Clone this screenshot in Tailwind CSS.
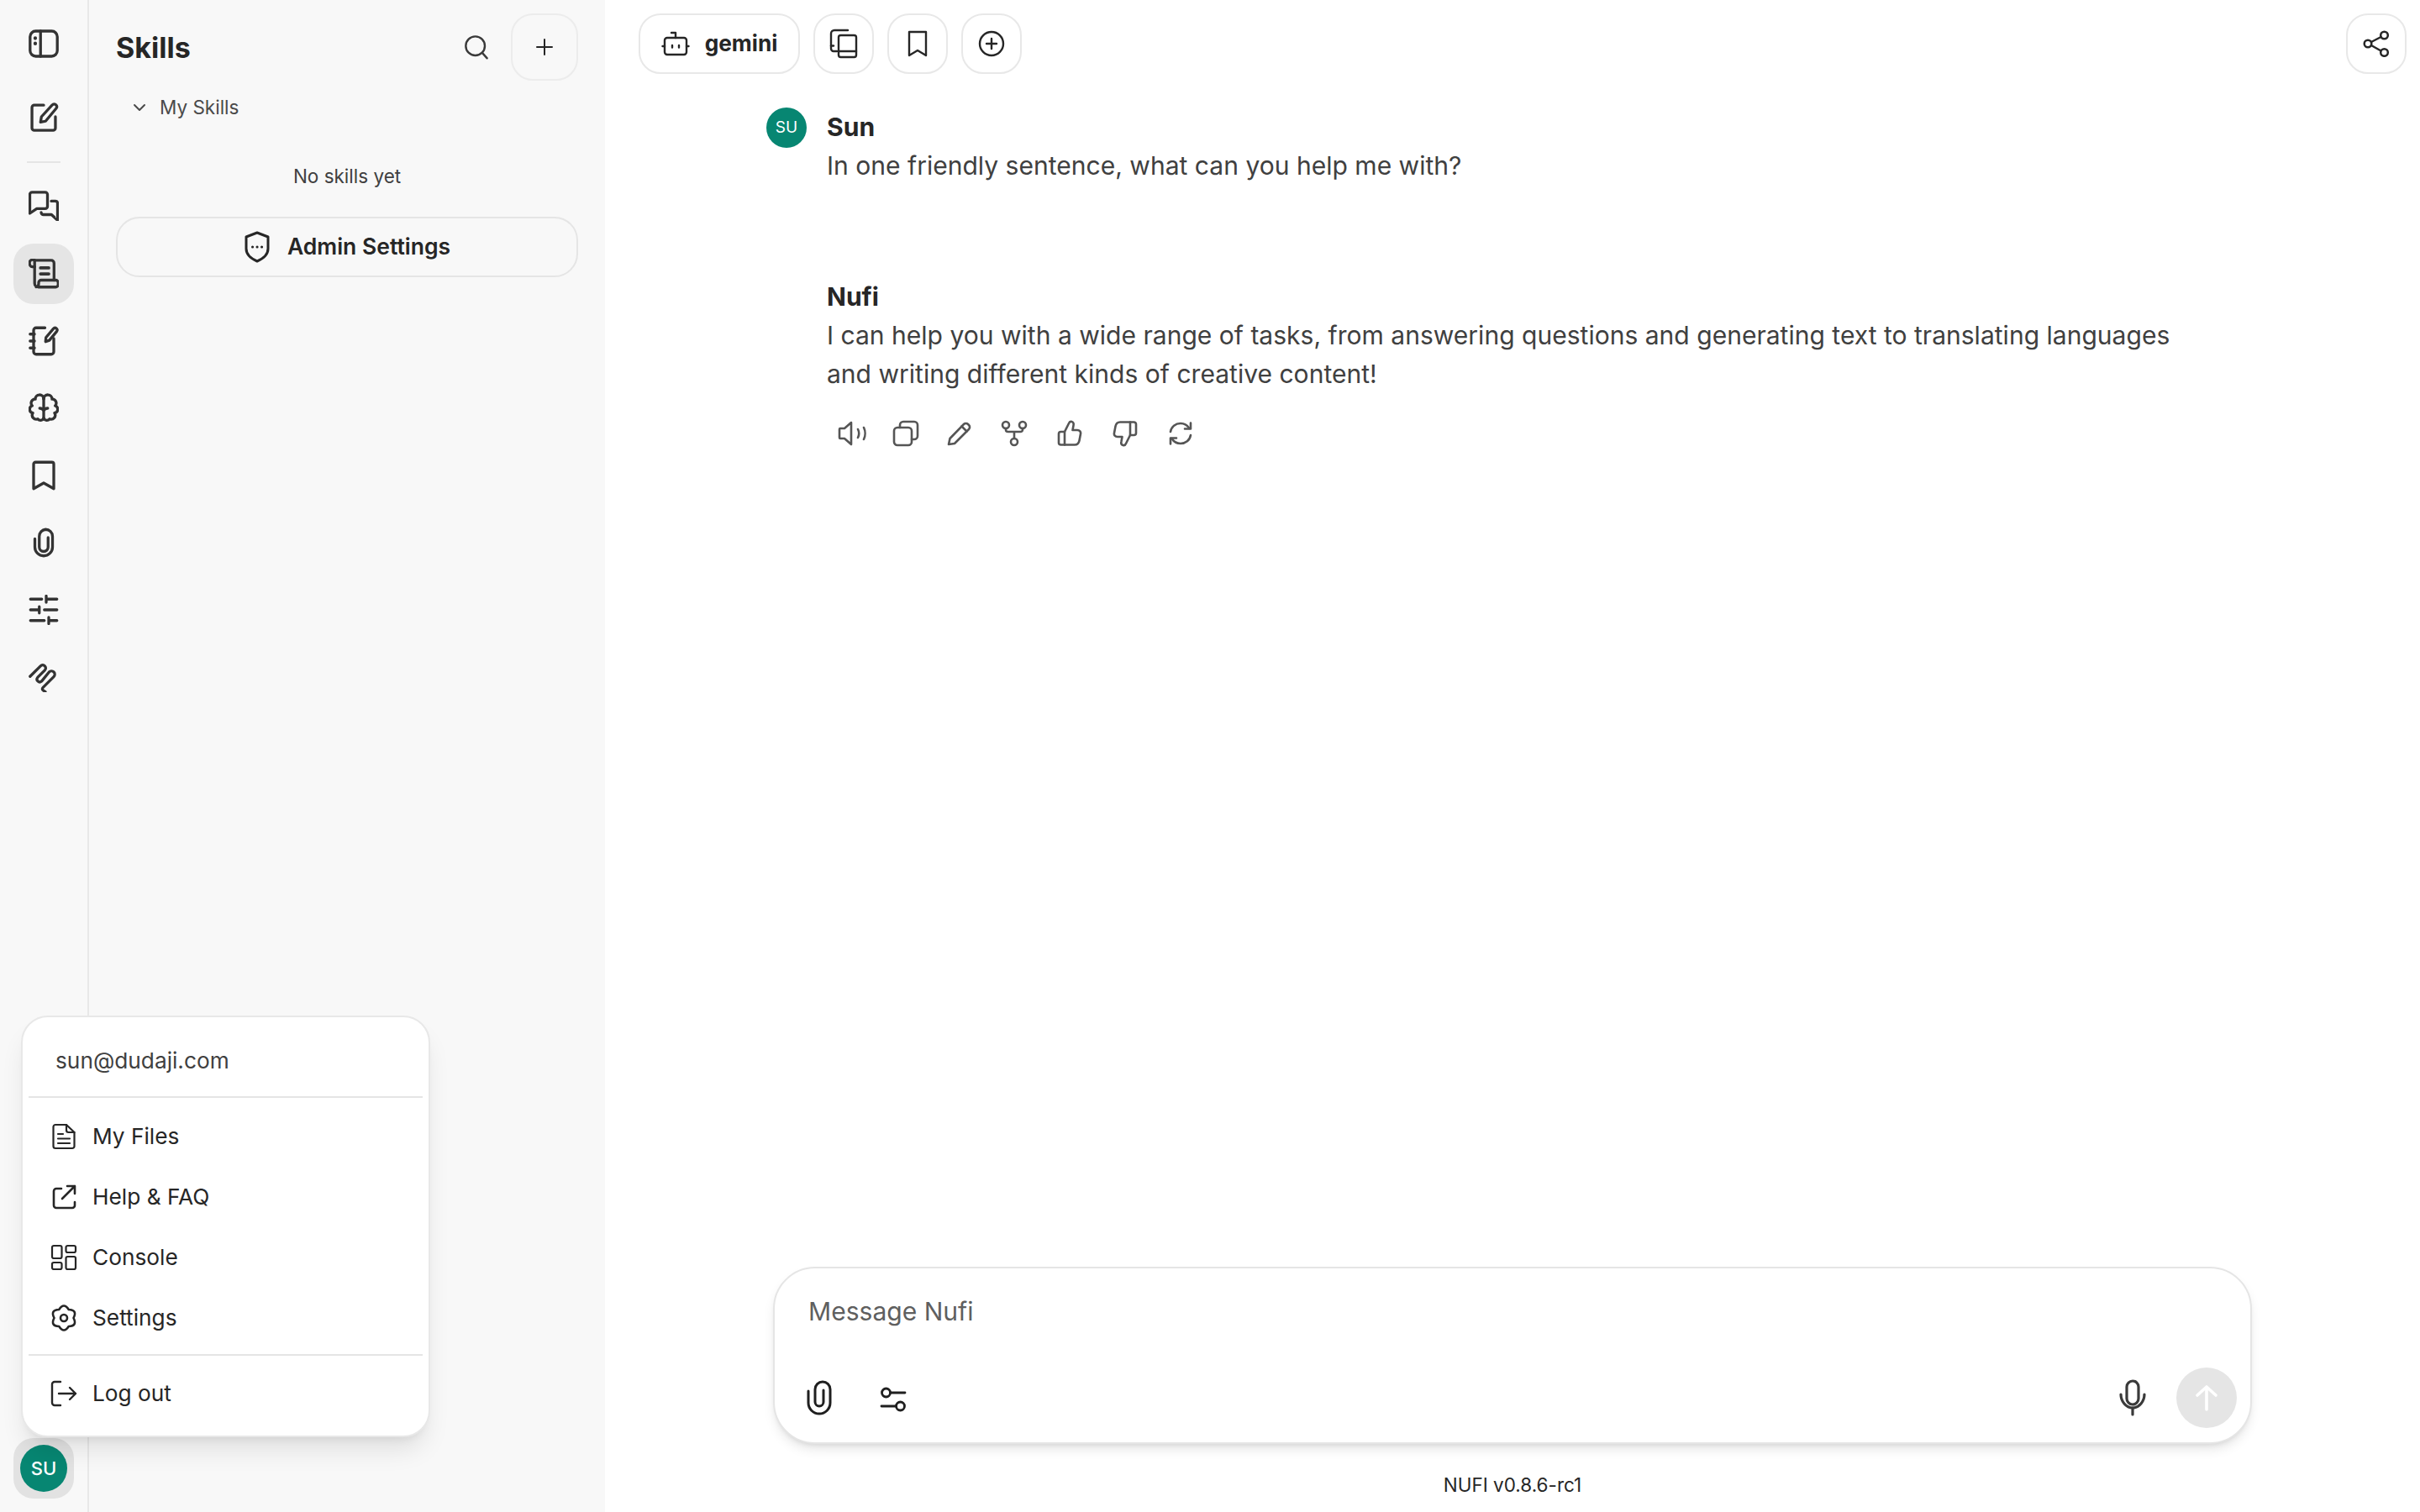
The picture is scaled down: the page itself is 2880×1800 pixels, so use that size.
<!DOCTYPE html>
<html lang="en">
<head>
  <meta charset="UTF-8" />
  <title>Nufi</title>
  <script src="https://cdn.jsdelivr.net/npm/@tailwindcss/browser@4"></script>
</head>
<body class="font-['Inter',sans-serif] bg-white">
  <div class="relative flex h-screen w-screen overflow-hidden">

    <!-- icon rail -->
    <aside class="flex w-[106px] shrink-0 flex-col items-center border-r-2 border-[#e8e8e8] bg-[#f8f8f8] text-[#333333]">
      <button class="mt-[16px] flex h-[72px] w-[72px] items-center justify-center">
        <svg class="h-[36px] w-[36px]" viewBox="0 0 24 24" fill="none" stroke="currentColor" stroke-width="2.200" stroke-linecap="round" stroke-linejoin="round"><rect x="1.200" y="2" width="21.600" height="20" rx="4.500"/><path d="M9.500 2v20"/><path d="M5.300 7.500v.2M5.300 11.800v.2" stroke-width="2.800"/></svg>
      </button>
      <button class="mt-[15px] flex h-[72px] w-[72px] items-center justify-center">
        <svg class="h-[36px] w-[36px]" viewBox="0 0 24 24" fill="none" stroke="currentColor" stroke-width="2.200" stroke-linecap="round" stroke-linejoin="round"><path d="M12 2.800H4.500a1.800 1.800 0 0 0-1.800 1.800V21a1.800 1.800 0 0 0 1.800 1.800h15a1.800 1.800 0 0 0 1.800-1.800v-9"/><path d="M9.500 16.300l.7-4.300L18.800 2.600a1.900 1.900 0 0 1 3 0c.8.900.8 2 0 2.900L13.500 15.500z"/></svg>
      </button>
      <div class="mt-[17px] h-[2px] w-[40px] bg-[#e5e5e5]"></div>
      <button class="mt-[15px] flex h-[72px] w-[72px] items-center justify-center">
        <svg class="h-[36px] w-[36px]" viewBox="0 0 24 24" fill="none" stroke="currentColor" stroke-width="2.200" stroke-linecap="round" stroke-linejoin="round"><path d="M2.800 1.200h10.400a1.800 1.800 0 0 1 1.800 1.800v9.500a1.800 1.800 0 0 1-1.800 1.800H6.500L1 18V3a1.800 1.800 0 0 1 1.800-1.800z"/><path d="M18 8.300h3.200A1.800 1.800 0 0 1 23 10v13.500l-4.800-4.500h-6.400A1.800 1.800 0 0 1 10 17.200"/></svg>
      </button>
      <button class="mt-[9px] flex h-[72px] w-[72px] items-center justify-center rounded-[24px] bg-[#e5e5e5]">
        <svg class="h-[36px] w-[36px]" viewBox="0 0 24 24" fill="none" stroke="currentColor" stroke-width="2.200" stroke-linecap="round" stroke-linejoin="round"><path d="M4.800 1.300H18a2.200 2.200 0 0 1 2.200 2.200V17"/><path d="M4.800 1.300A2.500 2.500 0 0 0 .8 3.600 2.600 2.600 0 0 0 3 6.400h1.800"/><path d="M4.800 1.300V19.500a3 3 0 0 0 3 3H21.500a2 2 0 0 0 2-2V19a2 2 0 0 0-2-2H10a2 2 0 0 0-2 2v1a2.500 2.500 0 0 1-2 2.400"/><path d="M9.500 7.300h6.500M9.500 12h6.500" stroke-width="2.500"/></svg>
      </button>
      <button class="mt-[8px] flex h-[72px] w-[72px] items-center justify-center">
        <svg class="h-[36px] w-[36px]" viewBox="0 0 24 24" fill="none" stroke="currentColor" stroke-width="2.200" stroke-linecap="round" stroke-linejoin="round"><path d="M13 1.500H6a2 2 0 0 0-2 2v17a2 2 0 0 0 2 2h12a2 2 0 0 0 2-2V10"/><path d="M1.200 6.500h3.500M1.200 12h3.500M1.200 17.500h3.500"/><path d="M13.500 12.500l.3-3.300 6-7.100a1.500 1.500 0 0 1 2.400 0c.7.700.7 1.500.1 2.300l-5.800 7z"/></svg>
      </button>
      <button class="mt-[8px] flex h-[72px] w-[72px] items-center justify-center">
        <svg class="h-[36px] w-[36px]" viewBox="0 0 24 24" fill="none" stroke="currentColor" stroke-width="2.200" stroke-linecap="round" stroke-linejoin="round"><path d="M12 4.500v15.500"/><path d="M8.800 12c1.300 0 2.400.6 3.200 1.800.8-1.200 1.900-1.800 3.200-1.800"/><path d="M12 4.500A3.300 3.300 0 0 0 5.400 4.800 3.100 3.100 0 0 0 2.900 10 3 3 0 0 0 3.400 15.800 3.200 3.200 0 0 0 7.300 20.500 2.800 2.800 0 0 0 12 20"/><path d="M12 4.500A3.300 3.300 0 0 1 18.600 4.800 3.100 3.100 0 0 1 21.100 10 3 3 0 0 1 20.600 15.800 3.200 3.200 0 0 1 16.700 20.500 2.800 2.800 0 0 1 12 20"/></svg>
      </button>
      <button class="mt-[8px] flex h-[72px] w-[72px] items-center justify-center">
        <svg class="h-[36px] w-[36px]" viewBox="0 0 24 24" fill="none" stroke="currentColor" stroke-width="2.200" stroke-linecap="round" stroke-linejoin="round"><path d="M5.500 1.500h13A1.500 1.500 0 0 1 20 3v19.500l-8-4.500-8 4.500V3a1.500 1.500 0 0 1 1.500-1.500z"/></svg>
      </button>
      <button class="mt-[8px] flex h-[72px] w-[72px] items-center justify-center">
        <svg class="h-[36px] w-[36px]" viewBox="0 0 24 24" fill="none" stroke="currentColor" stroke-width="2.200" stroke-linecap="round" stroke-linejoin="round"><path d="M5 9v6.500a7 7 0 0 0 14 0V7a5.500 5.500 0 0 0-5.500-5.500A5.500 5.500 0 0 0 8.500 7v8.500a3.500 3.500 0 0 0 7 0V8"/></svg>
      </button>
      <button class="mt-[8px] flex h-[72px] w-[72px] items-center justify-center">
        <svg class="h-[36px] w-[36px]" viewBox="0 0 24 24" fill="none" stroke="currentColor" stroke-width="2.200" stroke-linecap="round" stroke-linejoin="round"><path d="M1.500 3.500h9M14 3.500h8.500M14 1v5"/><path d="M1.500 12h7M8.500 9.500v5M12.500 12h10"/><path d="M1.500 20.500h11M16 20.500h6.500M16 18v5"/></svg>
      </button>
      <button class="mt-[8px] flex h-[72px] w-[72px] items-center justify-center">
        <svg class="h-[36px] w-[36px]" viewBox="0 0 24 24" fill="none" stroke="currentColor" stroke-width="2.200" stroke-linecap="round" stroke-linejoin="round"><path d="M1.200 11.500L9.500 3.200a2.400 2.400 0 0 1 3.400 3.400L7.200 12.300a2.200 2.200 0 0 0 3.100 3.100L16.300 8a2.600 2.600 0 0 1 3.700 3.700L11.500 20.300c-.8.800-.8 1.600 0 2.200l1.800 1.300"/></svg>
      </button>
      <button class="mt-auto mb-[16px] flex h-[72px] w-[72px] items-center justify-center rounded-[24px] bg-[#e2e2e2]">
        <span class="flex h-[56px] w-[56px] items-center justify-center rounded-full bg-[#078672] text-[22px] font-medium text-white">SU</span>
      </button>
    </aside>

    <!-- skills panel -->
    <section class="flex w-[614px] shrink-0 flex-col bg-[#f8f8f8] pl-[32px] pr-[32px] text-[#262626]">
      <div class="mt-[16px] flex h-[80px] items-center">
        <h1 class="text-[34px] font-bold">Skills</h1>
        <svg class="ml-auto mr-[25px] h-[32px] w-[32px] text-[#3a3a3a]" viewBox="0 0 24 24" fill="none" stroke="currentColor" stroke-width="1.800" stroke-linecap="round"><circle cx="11" cy="11" r="8.500"/><path d="M17.500 17.500L21.500 22"/></svg>
        <button class="flex h-[80px] w-[80px] items-center justify-center rounded-[26px] border-2 border-[#ececec]">
          <svg class="h-[20px] w-[20px]" viewBox="0 0 20 20" fill="none" stroke="currentColor" stroke-width="2" stroke-linecap="round"><path d="M10 1v18M1 10h18"/></svg>
        </button>
      </div>
      <div class="mt-[16px] flex h-[32px] items-center pl-[20px] text-[22.5px] text-[#4a4a4a]">
        <svg class="h-[16px] w-[16px]" viewBox="0 0 16 16" fill="none" stroke="currentColor" stroke-width="2" stroke-linecap="round" stroke-linejoin="round"><path d="M2 5l6 6 6-6"/></svg>
        <span class="ml-[16px]">My Skills</span>
      </div>
      <p class="mt-[50px] h-[32px] text-center text-[22.5px] leading-[32px] text-[#404040]">No skills yet</p>
      <button class="mt-[32px] flex h-[72px] items-center justify-center gap-[20px] rounded-[28px] border-2 border-[#e5e5e5] text-[26.5px] font-semibold">
        <svg class="h-[38px] w-[32px]" viewBox="0 0 32 38" fill="none" stroke="currentColor" stroke-width="3" stroke-linecap="round" stroke-linejoin="round"><path d="M16 2l13 5v14c0 8-6 12-13 15C9 33 3 29 3 21V7z"/><path d="M10.500 19h.1M16 19h.1M21.500 19h.1"/></svg>
        Admin Settings
      </button>
    </section>

    <!-- main -->
    <main class="flex min-w-0 flex-1 flex-col bg-white text-[#262626]">
      <header class="flex h-[88px] items-end pl-[40px] pr-[16px]">
        <button class="flex h-[72px] w-[192px] items-center justify-center gap-[18px] rounded-[26px] border-2 border-[#e8e8e8] text-[26.25px] font-bold">
          <svg class="h-[34px] w-[34px]" viewBox="0 0 34 34" fill="none" stroke="currentColor" stroke-width="2.400" stroke-linecap="round" stroke-linejoin="round"><rect x="4" y="10" width="26" height="20" rx="3"/><path d="M17 10V4h-5"/><path d="M1.500 20H4M30 20h2.500"/><path d="M13 19v2.500M21 19v2.500"/></svg>
          gemini
        </button>
        <button class="ml-[16px] flex h-[72px] w-[72px] items-center justify-center rounded-[26px] border-2 border-[#e8e8e8]">
          <svg class="h-[36px] w-[36px]" viewBox="0 0 36 36" fill="none" stroke="currentColor" stroke-width="2.400" stroke-linecap="round" stroke-linejoin="round"><path d="M23 2H7a4 4 0 0 0-4 4v18a3 3 0 0 0 3 3h4"/><path d="M3 20.500h3"/><rect x="12" y="8" width="21" height="26" rx="2.500"/><path d="M12 27h21"/></svg>
        </button>
        <button class="ml-[16px] flex h-[72px] w-[72px] items-center justify-center rounded-[26px] border-2 border-[#e8e8e8]">
          <svg class="h-[32px] w-[24px]" viewBox="0 0 24 32" fill="none" stroke="currentColor" stroke-width="2.400" stroke-linecap="round" stroke-linejoin="round"><path d="M2 2h20v28l-10-6-10 6z"/></svg>
        </button>
        <button class="ml-[16px] flex h-[72px] w-[72px] items-center justify-center rounded-[26px] border-2 border-[#e8e8e8]">
          <svg class="h-[32px] w-[32px]" viewBox="0 0 32 32" fill="none" stroke="currentColor" stroke-width="2.400" stroke-linecap="round"><circle cx="16" cy="16" r="14"/><path d="M16 10v12M10 16h12"/></svg>
        </button>
        <button class="ml-auto flex h-[72px] w-[72px] items-center justify-center rounded-[26px] border-2 border-[#e8e8e8]">
          <svg class="h-[32px] w-[32px]" viewBox="0 0 32 32" fill="none" stroke="currentColor" stroke-width="2.500" stroke-linecap="round"><circle cx="6" cy="16" r="4.300"/><circle cx="25.500" cy="6" r="4.300"/><circle cx="25.500" cy="26.500" r="4.300"/><path d="M10 14l11.500-6M10 18l11.500 6.500"/></svg>
        </button>
      </header>

      <div class="min-h-0 flex-1">
        <div class="mt-[40px] flex gap-[24px] pl-[192px]">
          <div class="flex h-[48px] w-[48px] shrink-0 items-center justify-center rounded-full bg-[#078672] text-[19px] font-normal text-white">SU</div>
          <div class="text-[30.05px] leading-[46px]">
            <div class="font-bold">Sun</div>
            <div class="text-[#404040]">In one friendly sentence, what can you help me with?</div>
          </div>
        </div>
        <div class="mt-[110px] pl-[264px] text-[30.05px] leading-[46px]">
          <div class="font-bold">Nufi</div>
          <div class="max-w-[1640px] text-[#404040]">I can help you with a wide range of tasks, from answering questions and generating text to translating languages and writing different kinds of creative content!</div>
          <div class="mt-[32px] flex h-[32px] items-center text-[#555555]">
            <span class="ml-[13px] flex w-[65px] items-start">
              <svg class="h-[32px] w-[36px]" viewBox="0 0 36 32" fill="none" stroke="currentColor" stroke-width="2.600" stroke-linecap="round" stroke-linejoin="round"><path d="M2 11v10a1 1 0 0 0 1 1h5l8 7V3L8 10H3a1 1 0 0 0-1 1z"/><path d="M24 11c1.500 3 1.500 7 0 10M31 9c2 4 2 10 0 14"/></svg>
            </span>
            <span class="flex w-[65px]">
              <svg class="h-[32px] w-[32px]" viewBox="0 0 32 32" fill="none" stroke="currentColor" stroke-width="2.600" stroke-linecap="round" stroke-linejoin="round"><rect x="2" y="9" width="21" height="21" rx="4"/><path d="M9 9V6a4 4 0 0 1 4-4h13a4 4 0 0 1 4 4v13a4 4 0 0 1-4 4h-3"/></svg>
            </span>
            <span class="flex w-[64px]">
              <svg class="h-[30px] w-[30px]" viewBox="0 0 30 30" fill="none" stroke="currentColor" stroke-width="2.600" stroke-linecap="round" stroke-linejoin="round"><path d="M2 28l1.500-7L20 4a3.500 3.500 0 0 1 5 0l1 1a3.500 3.500 0 0 1 0 5L9 27z"/><path d="M17.500 6.500l6 6"/></svg>
            </span>
            <span class="flex w-[67px]">
              <svg class="h-[32px] w-[32px]" viewBox="0 0 32 32" fill="none" stroke="currentColor" stroke-width="2.600" stroke-linecap="round"><circle cx="6" cy="6" r="4"/><circle cx="26" cy="6" r="4"/><circle cx="16" cy="26" r="4"/><path d="M6 10v1.500A2.500 2.500 0 0 0 8.500 14h15a2.500 2.500 0 0 0 2.500-2.500V10M16 14v8"/></svg>
            </span>
            <span class="flex w-[66px]">
              <svg class="h-[32px] w-[30px]" viewBox="0 0 30 32" fill="none" stroke="currentColor" stroke-width="2.600" stroke-linecap="round" stroke-linejoin="round"><path d="M9 14l5-10c.6-1.500 2-2.500 3.500-2 2 .5 2.500 2.500 2 4.500L18.500 12H24c3 0 4.500 2 4 4.500l-1.500 8c-.6 3-2.500 5-5.500 5H9z"/><path d="M9 14H4.500A2.500 2.500 0 0 0 2 16.500v10.500A2.500 2.500 0 0 0 4.500 29.500H9"/></svg>
            </span>
            <span class="flex w-[66px]">
              <svg class="h-[32px] w-[30px]" viewBox="0 0 30 32" fill="none" stroke="currentColor" stroke-width="2.600" stroke-linecap="round" stroke-linejoin="round"><path d="M21 18l-5 10c-.6 1.500-2 2.500-3.500 2-2-.5-2.500-2.500-2-4.500L11.500 20H6c-3 0-4.500-2-4-4.500l1.500-8c.6-3 2.500-5 5.500-5h12z"/><path d="M21 18h4.500A2.500 2.500 0 0 0 28 15.500V5A2.500 2.500 0 0 0 25.500 2.500H21"/></svg>
            </span>
            <span class="flex w-[32px]">
              <svg class="h-[30px] w-[30px]" viewBox="0 0 30 30" fill="none" stroke="currentColor" stroke-width="2.600" stroke-linecap="round" stroke-linejoin="round"><path d="M3 13C4 7 9 3 15 3c4.500 0 8 2 10.500 6"/><path d="M27 2.500V9.500h-7"/><path d="M27 17c-1 6-6 10-12 10-4.500 0-8-2-10.500-6"/><path d="M3 27.500V20.500h7"/></svg>
            </span>
          </div>
        </div>
      </div>

      <!-- composer -->
      <div class="mx-auto flex h-[211px] w-[1760px] shrink-0 flex-col rounded-[50px] border-2 border-[#e5e5e5] bg-white shadow-[0_8px_14px_-2px_rgba(0,0,0,0.1),0_4px_6px_-4px_rgba(0,0,0,0.12)]">
        <div class="mt-[28px] pl-[40px] text-[30.05px] leading-[46px] text-[#5f5f5f]">Message Nufi</div>
        <div class="mt-auto mb-[17px] flex items-center pl-[38px] pr-[16px]">
          <svg class="h-[42px] w-[30px] text-[#1f1f1f]" viewBox="0 0 30 42" fill="none" stroke="currentColor" stroke-width="3" stroke-linecap="round" stroke-linejoin="round"><path d="M2 13v14a13 13 0 0 0 26 0V11a9 9 0 0 0-18 0v15a5 5 0 0 0 10 0V12"/></svg>
          <svg class="ml-[57px] mt-[3px] h-[32px] w-[32px] text-[#1f1f1f]" viewBox="0 0 32 32" fill="none" stroke="currentColor" stroke-width="2.800" stroke-linecap="round"><circle cx="7.500" cy="8" r="5"/><path d="M12.500 8H30"/><circle cx="24.500" cy="24" r="5"/><path d="M19.500 24H2"/></svg>
          <svg class="ml-auto mr-[36px] h-[44px] w-[32px] text-[#3a3a3a]" viewBox="0 0 32 44" fill="none" stroke="currentColor" stroke-width="3.200" stroke-linecap="round"><rect x="9" y="2" width="14" height="28" rx="7"/><path d="M2 18c0 8 6 16 14 16s14-8 14-16"/><path d="M16 34v8"/></svg>
          <button class="flex h-[72px] w-[72px] items-center justify-center rounded-full bg-[#e5e5e5]">
            <svg class="h-[32px] w-[28px]" viewBox="0 0 28 32" fill="none" stroke="#ffffff" stroke-width="3.600" stroke-linecap="round" stroke-linejoin="round"><path d="M14 30V3M3 13L14 3l11 10"/></svg>
          </button>
        </div>
      </div>
      <div class="flex h-[81px] shrink-0 items-center justify-center pt-[16px] text-[22.5px] text-[#262626]">NUFI v0.8.6-rc1</div>
    </main>

    <!-- user menu -->
    <div class="absolute left-[25px] top-[1209px] w-[487px] rounded-[32px] border-2 border-[#e8e8e8] bg-white pb-[14px] text-[26.25px] text-[#262626] shadow-[0_20px_30px_-6px_rgba(0,0,0,0.1),0_8px_12px_-8px_rgba(0,0,0,0.1)]">
      <div class="flex h-[94px] items-center pl-[39px] pt-[10px] text-[#404040]">sun@dudaji.com</div>
      <div class="mx-[7px] h-[2px] bg-[#e5e5e5]"></div>
      <div class="mt-[10px]">
        <div class="flex h-[72px] items-center gap-[18px] pl-[33px]">
          <svg class="h-[32px] w-[32px]" viewBox="0 0 32 32" fill="none" stroke="currentColor" stroke-width="2.200" stroke-linecap="round" stroke-linejoin="round"><path d="M19 2H6a2.500 2.500 0 0 0-2.500 2.500v23A2.500 2.500 0 0 0 6 30h20a2.500 2.500 0 0 0 2.500-2.500V11z"/><path d="M19 2v6.500a2.500 2.500 0 0 0 2.500 2.500h7"/><path d="M9 13h6M9 18.500h14M9 24h14"/></svg>
          My Files
        </div>
        <div class="flex h-[72px] items-center gap-[18px] pl-[33px]">
          <svg class="h-[32px] w-[32px]" viewBox="0 0 32 32" fill="none" stroke="currentColor" stroke-width="2.600" stroke-linecap="round" stroke-linejoin="round"><path d="M13 6H7a3 3 0 0 0-3 3v17a3 3 0 0 0 3 3h19a3 3 0 0 0 3-3v-4"/><path d="M14 18L29 3M20 3h9v9"/></svg>
          Help &amp; FAQ
        </div>
        <div class="flex h-[72px] items-center gap-[18px] pl-[33px]">
          <svg class="h-[32px] w-[32px]" viewBox="0 0 32 32" fill="none" stroke="currentColor" stroke-width="2.200" stroke-linejoin="round"><rect x="2" y="2" width="11.500" height="15" rx="2"/><rect x="18.500" y="2" width="11.500" height="8" rx="2"/><rect x="2" y="22" width="11.500" height="8" rx="2"/><rect x="18.500" y="15" width="11.500" height="15" rx="2"/></svg>
          Console
        </div>
        <div class="flex h-[72px] items-center gap-[18px] pl-[33px]">
          <svg class="h-[32px] w-[32px]" viewBox="0 0 32 32" fill="none" stroke="currentColor" stroke-width="2.600" stroke-linecap="round" stroke-linejoin="round"><circle cx="16" cy="16" r="4"/><path d="M21.750 6Q32.450 6.500 27.500 16 32.450 25.500 21.750 26 16 35 10.250 26-.45 25.500 4.500 16-.45 6.500 10.250 6 16-3 21.750 6z"/></svg>
          Settings
        </div>
      </div>
      <div class="mx-[7px] mt-[7px] h-[2px] bg-[#e5e5e5]"></div>
      <div class="mt-[9px] flex h-[72px] items-center gap-[18px] pl-[33px]">
        <svg class="h-[32px] w-[32px]" viewBox="0 0 32 32" fill="none" stroke="currentColor" stroke-width="2.400" stroke-linecap="round" stroke-linejoin="round"><path d="M12 2H5a3 3 0 0 0-3 3v22a3 3 0 0 0 3 3h7"/><path d="M10 16h20M23 9l7 7-7 7"/></svg>
        Log out
      </div>
    </div>
  </div>
</body>
</html>
